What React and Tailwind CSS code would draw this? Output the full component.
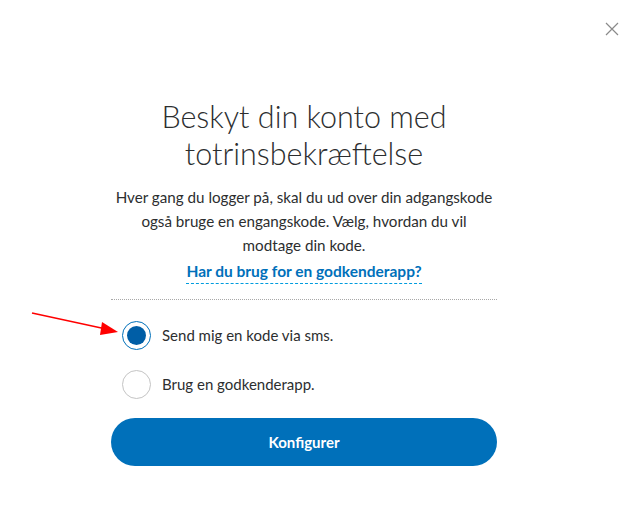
import { useState } from 'react';

// Two-step verification setup dialog

const RedArrow = () => (
  <svg className="absolute left-[28px] top-[308px]" width="96" height="30" viewBox="0 0 96 30">
    <line x1="4" y1="5" x2="78" y2="21" stroke="#f00" strokeWidth="1.5" />
    <polygon points="90,24 74,14 72,27" fill="#f00" />
  </svg>
);

const Radio = ({ checked, label, onSelect }) => (
  <button onClick={onSelect} className="flex items-center gap-[11px] text-left">
    {checked ? (
      <span className="w-[29px] h-[29px] rounded-full border border-[#0070ba] flex items-center justify-center">
        <span className="w-[19px] h-[19px] rounded-full bg-[#005ea6]" />
      </span>
    ) : (
      <span className="w-[29px] h-[29px] rounded-full border border-[#c4c4c4]" />
    )}
    <span className="text-[15px] text-[#2c2e2f]">{label}</span>
  </button>
);

export default function App() {
  const [choice, setChoice] = useState('sms');

  return (
    <div className="relative w-[630px] h-[514px] bg-white" style={{ fontFamily: "Lato, 'Noto Sans', sans-serif" }}>
      <button className="absolute right-[11px] top-[22px] w-[14px] h-[14px]">
        <svg width="14" height="14" viewBox="0 0 14 14">
          <path d="M1 1L13 13M13 1L1 13" stroke="#8a8a8a" strokeWidth="1.2" />
        </svg>
      </button>

      <RedArrow />

      <div className="ml-[111px] w-[386px] pt-[98px] flex flex-col">
        <h1 className="text-center text-[30.5px] leading-[37px] font-light text-[#2c2e2f]">
          Beskyt din konto med
          <br />
          totrinsbekræftelse
        </h1>
        <p className="mt-[13px] px-[4px] text-center text-[15.2px] leading-[24px] text-[#2c2e2f]">
          Hver gang du logger på, skal du ud over din adgangskode også bruge en engangskode. Vælg, hvordan du vil modtage din kode.
        </p>
        <div className="mt-[2px] flex justify-center">
          <a className="text-[15.5px] leading-[24px] font-bold text-[#0070ba] border-b border-dashed border-[#009cde]">
            Har du brug for en godkenderapp?
          </a>
        </div>
        <div className="mt-[15px] border-t border-dotted border-[#a8a8a8]" />

        <div className="mt-[21px] ml-[11px] flex flex-col gap-[20px]">
          <Radio checked={choice === 'sms'} label="Send mig en kode via sms." onSelect={() => setChoice('sms')} />
          <Radio checked={choice === 'app'} label="Brug en godkenderapp." onSelect={() => setChoice('app')} />
        </div>

        <button className="mt-[19px] h-[48px] w-full rounded-full bg-[#0070ba] text-white text-[15px] font-bold">
          Konfigurer
        </button>
      </div>
    </div>
  );
}
